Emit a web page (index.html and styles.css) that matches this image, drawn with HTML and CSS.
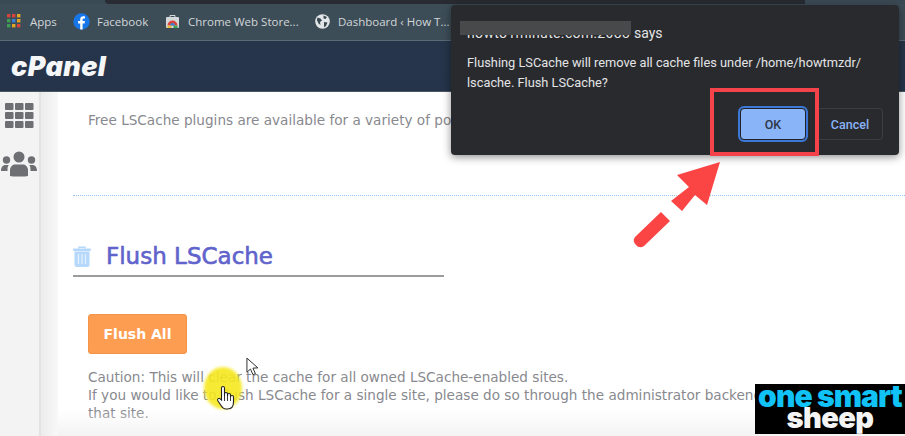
FILE: index.html
```html
<!DOCTYPE html>
<html lang="en">
<head>
<meta charset="utf-8">
<title>Flush LSCache</title>
<link rel="stylesheet" href="styles.css">
</head>
<body>
<div class="page">
  <div class="tabstrip"><div class="tab-active"></div></div>
  <nav class="bookmarks">
    <span class="bm bm-apps">
      <svg class="apps-grid" width="14" height="14" viewBox="0 0 14 14">
        <g fill="#d9453a"><rect x="0" width="3.4" height="3.4"/><rect x="5" width="3.4" height="3.4"/></g><rect x="10" width="3.4" height="3.4" fill="#e0a526"/>
        <rect x="0" y="5" width="3.4" height="3.4" fill="#3f9e52"/><rect x="5" y="5" width="3.4" height="3.4" fill="#3d7fd6"/><rect x="10" y="5" width="3.4" height="3.4" fill="#e0a526"/>
        <rect x="0" y="10" width="3.4" height="3.4" fill="#3f9e52"/><rect x="5" y="10" width="3.4" height="3.4" fill="#e0a526"/><rect x="10" y="10" width="3.4" height="3.4" fill="#d9453a"/>
      </svg>Apps</span>
    <span class="bm bm-fb">
      <svg width="17" height="17" viewBox="0 0 17 17"><circle cx="8.5" cy="8.5" r="8.2" fill="#1877e8"/><path d="M9.6 16.5v-6h2l.4-2.4H9.6V6.7c0-.8.3-1.2 1.2-1.2H12V3.4c-.4 0-1-.1-1.7-.1-1.9 0-3.1 1.1-3.1 3.1v1.7H5.1v2.4h2.1v6z" fill="#fff"/></svg>Facebook</span>
    <span class="bm bm-store">
      <svg width="15" height="15" viewBox="0 0 15 15"><path d="M5 3V1.5h5V3" fill="none" stroke="#d5d8da" stroke-width="1"/><rect x="1" y="3" width="13" height="11" rx="1" fill="#d5d8da"/><path d="M2.5 11.5a5 5 0 0 1 10 0z" fill="#d9453a"/><path d="M5 11.5a2.5 2.5 0 0 1 5 0z" fill="#3d7fd6"/><path d="M2.5 11.5h4v2.500h-4z" fill="#e9b93a"/><path d="M8.500 11.5h4v2.500h-4z" fill="#3f9e52"/></svg>Chrome Web Store...</span>
    <span class="bm bm-dash">
      <svg width="15" height="15" viewBox="0 0 15 15"><circle cx="7.500" cy="7.500" r="7.300" fill="#e3e6e8"/><path d="M2.500 3.500l3 1 1.500 2-2 1.500.5 3-2-1.500-1.600-3.500zM8.500 1.500l3.500 1.500-1.500 2-2-.5zM9 8l3.500.5-1.500 3.500-2 1.300z" fill="#3b4953"/></svg>Dashboard ‹ How T...</span>
  </nav>
  <header class="cp-header"><span class="cp-logo">cPanel</span></header>
  <div class="cp-body">
    <aside class="sidebar">
      <svg class="ico-grid" width="29" height="26" viewBox="0 0 29 26" fill="#6d6f72">
        <rect x="0" width="8.500" height="7" rx="1"/><rect x="10" width="8.500" height="7" rx="1"/><rect x="20" width="8.500" height="7" rx="1"/>
        <rect x="0" y="9" width="8.500" height="7" rx="1"/><rect x="10" y="9" width="8.500" height="7" rx="1"/><rect x="20" y="9" width="8.500" height="7" rx="1"/>
        <rect x="0" y="18" width="8.500" height="7" rx="1"/><rect x="10" y="18" width="8.500" height="7" rx="1"/><rect x="20" y="18" width="8.500" height="7" rx="1"/>
      </svg>
      <svg class="ico-users" width="36" height="26" viewBox="0 0 36 26" fill="#6d6f72">
        <circle cx="18" cy="6" r="5.500"/><circle cx="5.500" cy="9" r="3.700"/><circle cx="30.500" cy="9" r="3.700"/>
        <path d="M9 25v-6c0-3.500 3-5.500 5-5.500h8c2 0 5 2 5 5.500v6c-2 .8-16 .8-18 0z"/>
        <path d="M0 20c0-4 2-6 4.500-6h3.200C6.500 15.500 6.500 17 6.500 20zM36 20c0-4-2-6-4.500-6h-3.200c1.200 1.500 1.200 3 1.200 6z"/>
      </svg>
    </aside>
    <div class="gutter"></div>
    <main class="content">
      <p class="intro">Free LSCache plugins are available for a variety of popular CMS platforms.</p>
      <div class="dots"></div>
      <h2 class="section-title">
        <svg class="trash" width="18" height="21" viewBox="0 0 18 21"><path d="M6 2.500V1.200h6v1.300" fill="none" stroke="#b5d8fb" stroke-width="1.600"/><rect x="0" y="2.500" width="18" height="2.400" rx="1" fill="#b5d8fb"/><path d="M1.500 5.500h15V19a2 2 0 0 1-2 2h-11a2 2 0 0 1-2-2z" fill="#b5d8fb"/><path d="M5.500 8v10M9 8v10M12.500 8v10" stroke="#e6f2fe" stroke-width="1.200"/></svg>
        <span>Flush LSCache</span>
      </h2>
      <button class="flush-btn" type="button">Flush All</button>
      <p class="caution">Caution: This will clear the cache for all owned LSCache-enabled sites.<br>If you would like to flush LSCache for a single site, please do so through the administrator backend for<br>that site.</p>
    </main>
  </div>

  <div class="bottom-fade"></div>

  <section class="dialog">
    <div class="dialog-host">howto1minute.com:2083 <span class="says">says</span><div class="redact"></div></div>
    <p class="dialog-msg">Flushing LSCache will remove all cache files under /home/howtmzdr/<br>lscache. Flush LSCache?</p>
    <div class="dialog-actions">
      <button class="btn-ok" type="button">OK</button>
      <button class="btn-cancel" type="button">Cancel</button>
    </div>
  </section>
  <div class="highlight"></div>

  <svg class="arrow" width="100" height="100" viewBox="0 0 100 100">
    <path d="M90 5 L47 18 L59 30 L41 44 L52 54 L65 38 L77 48 Z" fill="#fb4444"/>
    <path d="M31 55 L40 64 L14 89 Q9.500 92 6 88 Q2 84 5 80 Z" fill="#fb4444"/>
  </svg>

  <div class="spot"></div>
  <svg class="cur-arrow" width="14" height="21" viewBox="0 0 15 22"><path d="M1 1v15l3.800-3.300 2.700 6 2.600-1.200-2.700-5.800 5.300-.3z" fill="#fff" stroke="#222" stroke-width="1"/></svg>
  <svg class="cur-hand" width="20" height="25" viewBox="0 0 20 25"><path d="M5.500 15V3a1.500 1.500 0 0 1 3 0v8-2a1.500 1.500 0 0 1 3 0v2-1a1.500 1.500 0 0 1 3 0v2a1.400 1.400 0 0 1 3 0v5c0 4-2 7-6 7H10c-2.500 0-3.500-1-5-3.500L1.700 15.500C1 14 3 12.500 4.200 13.800z" fill="#fff" stroke="#222" stroke-width="1.100"/><path d="M8.500 11v5M11.500 11v5M14.500 12v4" stroke="#222" stroke-width=".9"/></svg>

  <aside class="brand">
    <span class="brand-one">one smart</span>
    <span class="brand-two">sheep</span>
  </aside>
</div>
</body>
</html>
```
FILE: styles.css
```css
* { box-sizing: border-box; }
html, body { margin: 0; padding: 0; }
body { width: 905px; height: 436px; overflow: hidden; background: #fff; font-family: "DejaVu Sans", sans-serif; }
.page { position: relative; width: 905px; height: 436px; overflow: hidden; display: flex; flex-direction: column; }

.tabstrip { height: 4px; background: #3a4a55; flex: none; }
.tab-active { width: 700px; height: 4px; margin-left: 105px; background: #282b31; border-radius: 0 0 0 6px; }

.bookmarks { flex: none; height: 37px; background: #3d4d58; border-bottom: 1px solid #5b6a74; display: flex; align-items: center; padding: 0 0 2px 7px; font-family: "Open Sans", sans-serif; font-size: 11.500px; color: #d3d7d9; }
.bm { display: inline-flex; align-items: center; white-space: nowrap; }
.bm-apps svg { margin-right: 9px; }
.bm-apps { width: 66px; }
.bm-fb { width: 92px; }
.bm-fb svg { margin-right: 7px; }
.bm-store { width: 150px; }
.bm-store svg { margin-right: 8px; }
.bm-dash svg { margin-right: 8px; }

.cp-header { flex: none; height: 51px; background: linear-gradient(#26354a, #25344a); border-bottom: 1px solid #4b5560; display: flex; align-items: center; padding: 0 0 0 11px; }
.cp-logo { font-family: "Inter", sans-serif; font-weight: 900; font-style: italic; font-size: 27px; letter-spacing: .4px; color: #f4f6f8; line-height: 1; }

.cp-body { flex: 1; display: flex; min-height: 0; }
.sidebar { flex: none; width: 41px; background: #f3f3f4; border-right: 2px solid #e3e3e4; display: flex; flex-direction: column; align-items: center; padding-top: 11px; gap: 22px; }
.ico-users { margin-left: -2px; }
.gutter { flex: none; width: 17px; background: linear-gradient(90deg, #ececed, #f8f8f8); }
.content { flex: 1; background: #fff; padding: 18px 0 0 30px; position: relative; color: #88898e; }
.intro { margin: 0; font-size: 13.600px; line-height: 20px; white-space: nowrap; }
.dots { height: 0; margin: 65px 0 0 -15px; border-top: 1px dotted #93c5f4; }
.section-title { margin: 45px 0 0 -15px; width: 371px; height: 36px; border-bottom: 2px solid #9c9c9f; display: flex; align-items: flex-start; gap: 15px; font-size: 23px; font-weight: 400; line-height: 30px; color: #5f63cb; -webkit-text-stroke: .6px #5f63cb; }
.trash { margin-top: 5px; }
.flush-btn { display: block; margin: 37px 0 0 0; width: 99px; height: 40px; padding: 0; background: #fd9d51; border: 1px solid #f39348; border-radius: 3px; color: #fff; font-family: "DejaVu Sans", sans-serif; font-size: 14px; font-weight: 700; }
.caution { margin: 14px 0 0; font-size: 13.600px; line-height: 18px; white-space: nowrap; }

.bottom-fade { position: absolute; left: 58px; right: 0; bottom: 0; height: 26px; background: linear-gradient(rgba(245,245,246,0), #f3f3f4); pointer-events: none; }

.dialog { position: absolute; left: 451px; top: 5px; width: 448px; height: 150px; background: #292a2d; border-radius: 4px; box-shadow: 0 2px 8px rgba(0,0,0,.45); color: #e3e4e6; font-family: "Roboto", sans-serif; padding: 17px 0 0 16px; }
.dialog-host { position: relative; font-size: 14px; letter-spacing: .35px; line-height: 22px; color: #e3e4e6; white-space: nowrap; height: 22px; }
.says { letter-spacing: 0; }
.redact { position: absolute; left: -7px; top: -1px; width: 171px; height: 14px; background: #48494b; }
.dialog-msg { margin: 9px 0 0; font-size: 12.800px; line-height: 20px; white-space: nowrap; }
.dialog-actions { display: flex; gap: 11px; margin: 15px 0 0 273px; align-items: center; }
.btn-ok { width: 66px; height: 32px; padding: 0; background: #8ab4f8; border: 1px solid #202124; outline: 2px solid #3b78d8; border-radius: 4px; font-family: "Roboto", sans-serif; font-size: 12.500px; font-weight: 500; color: #2d3748; }
.btn-cancel { width: 66px; height: 32px; padding: 0; background: transparent; border: 1px solid #3d3e41; border-radius: 4px; font-family: "Roboto", sans-serif; font-size: 12.500px; font-weight: 500; color: #8ab4f8; }

.highlight { position: absolute; left: 710px; top: 88px; width: 109px; height: 68px; border: 4px solid #f4434a; }
.arrow { position: absolute; left: 630px; top: 157px; }

.spot { position: absolute; left: 204px; top: 367px; width: 38px; height: 42px; border-radius: 50%; background: rgba(246,232,30,.9); filter: blur(1.500px); }
.cur-arrow { position: absolute; left: 246px; top: 357px; }
.cur-hand { position: absolute; left: 216px; top: 385px; }

.brand { position: absolute; left: 755px; top: 384px; width: 150px; height: 50px; background: #000; display: flex; flex-direction: column; align-items: center; font-family: "Inter", sans-serif; font-weight: 900; line-height: 1; overflow: hidden; }
.brand-one { color: #10c2f5; font-size: 30px; letter-spacing: -.9px; white-space: nowrap; height: 19px; line-height: 24px; }
.brand-two { color: #f4f4f4; font-size: 29px; letter-spacing: -.6px; line-height: 30px; }
```
